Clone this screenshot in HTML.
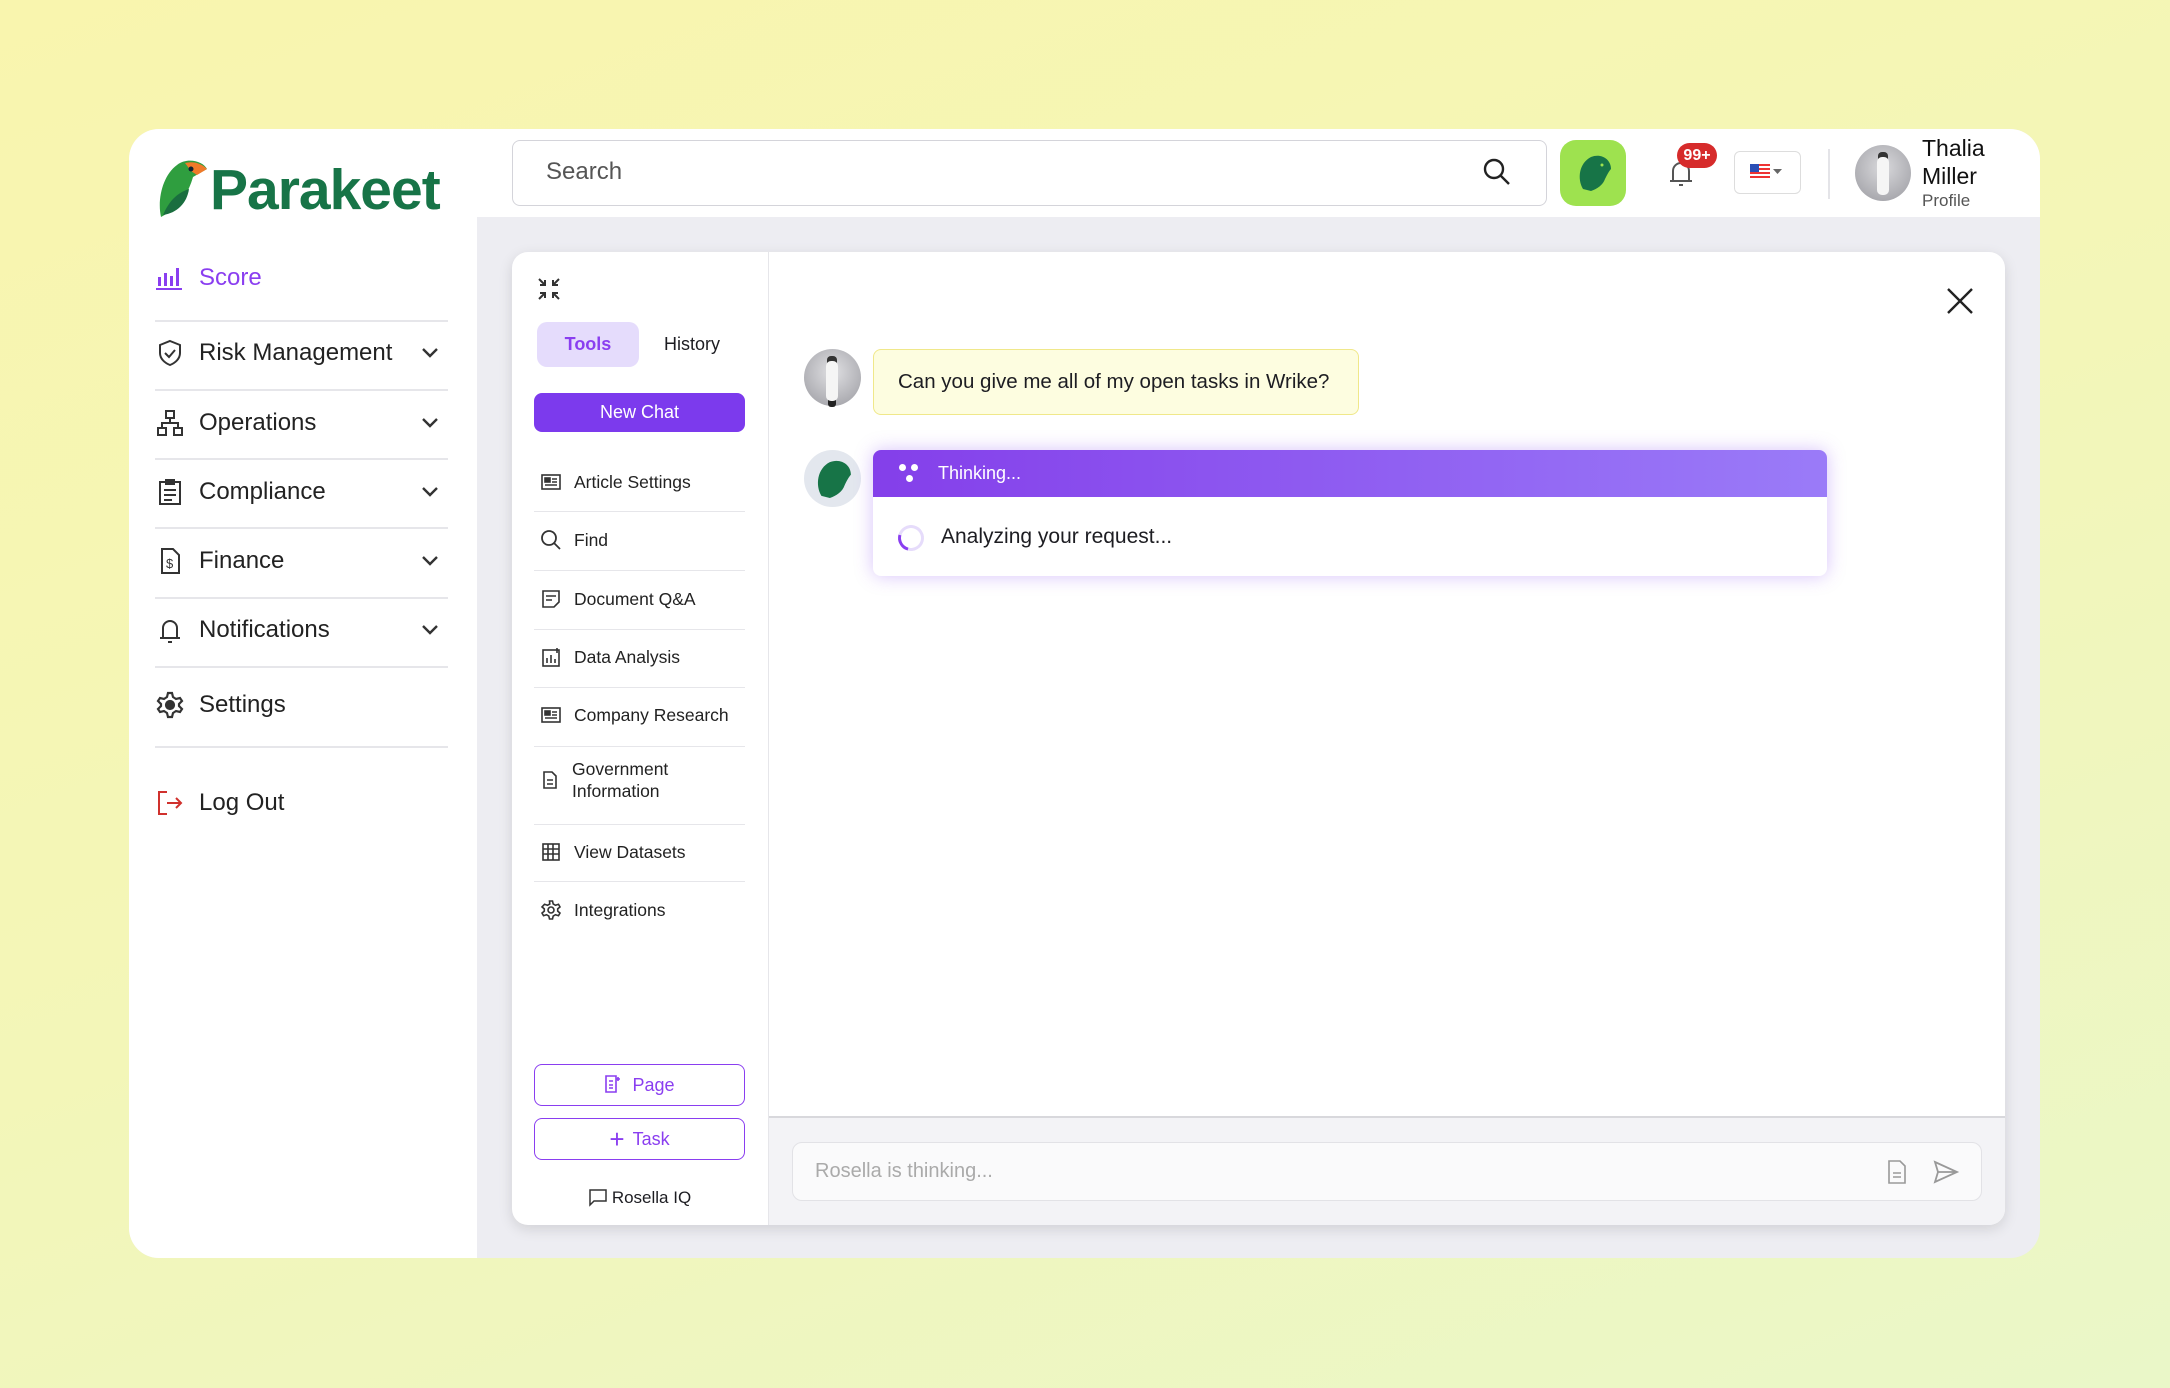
<!DOCTYPE html>
<html><head><meta charset="utf-8"><style>
*{box-sizing:border-box;margin:0;padding:0}
body{width:2170px;height:1388px;overflow:hidden;font-family:"Liberation Sans",sans-serif;background:linear-gradient(160deg,#f9f5ae 0%,#f3f6b8 50%,#eaf7c8 100%);position:relative;color:#1d1d22}
.a{position:absolute}
.card{left:129px;top:129px;width:1911px;height:1129px;background:#ededf2;border-radius:30px;overflow:hidden}
.side{left:0;top:0;width:348px;height:1129px;background:#fff}
.top{left:348px;top:0;width:1563px;height:88px;background:#fff}
.nav{position:absolute;left:26px;width:293px;font-size:24px;color:#222;display:flex;align-items:center}
.nav svg{margin-right:14px}
.hr{position:absolute;left:26px;width:293px;height:2px;background:#e6e6ea}
.chev{position:absolute;right:-6px}
.panel{left:383px;top:123px;width:1493px;height:973px;background:#fff;border-radius:16px;box-shadow:0 4px 14px rgba(0,0,0,.12);overflow:hidden}
.tool{position:absolute;left:28px;font-size:17.5px;color:#222;display:flex;align-items:center}
.tool svg{margin-right:12px}
.th{position:absolute;left:22px;width:211px;height:1px;background:#e6e6ea}
</style></head><body>
<div class="a card">
 <div class="a side">
  <svg class="a" style="left:26px;top:30px" width="60" height="62" viewBox="0 0 60 62"><path d="M22 6c10-8 26-4 30 4l-14 8c-4 14-12 30-32 40C2 40 8 16 22 6z" fill="#2f9e3f"/><path d="M30 4c8-2 16 0 22 6l-10 6-6-4z" fill="#ef7a2a"/><path d="M8 56c6-14 14-22 26-26-2 14-12 24-26 26z" fill="#1a6e3f"/><circle cx="36" cy="10" r="2.5" fill="#123"/></svg>
  <div class="a" style="left:81px;top:28px;font-size:57px;font-weight:700;color:#177447;letter-spacing:-1px">Parakeet</div>
  <div class="nav" style="top:135px;color:#8a3ef0"><svg width="30" height="26" viewBox="0 0 30 26" fill="#8a3ef0"><rect x="3" y="12" width="3" height="9"/><rect x="9" y="8" width="3" height="13"/><rect x="15" y="11" width="3" height="10"/><rect x="21" y="3" width="3" height="18"/><rect x="1" y="23" width="26" height="2"/></svg>Score</div>
  <div class="hr" style="top:191px"></div>
  <div class="nav" style="top:209px"><svg width="30" height="30" viewBox="0 0 30 30" fill="none" stroke="#333" stroke-width="2"><path d="M15 3l10 4v8c0 6-5 10-10 12-5-2-10-6-10-12V7z"/><path d="M10 15l4 4 6-7"/></svg>Risk Management<svg class="chev" width="20" height="12" viewBox="0 0 20 12"><path d="M3 2l7 7 7-7" fill="none" stroke="#333" stroke-width="2.4"/></svg></div>
  <div class="hr" style="top:260px"></div>
  <div class="nav" style="top:279px"><svg width="30" height="30" viewBox="0 0 30 30" fill="none" stroke="#333" stroke-width="2"><rect x="11" y="3" width="8" height="7"/><rect x="3" y="20" width="8" height="7"/><rect x="19" y="20" width="8" height="7"/><path d="M15 10v5M7 20v-5h16v5"/></svg>Operations<svg class="chev" width="20" height="12" viewBox="0 0 20 12"><path d="M3 2l7 7 7-7" fill="none" stroke="#333" stroke-width="2.4"/></svg></div>
  <div class="hr" style="top:329px"></div>
  <div class="nav" style="top:348px"><svg width="30" height="30" viewBox="0 0 30 30" fill="none" stroke="#333" stroke-width="2"><rect x="5" y="5" width="20" height="22"/><rect x="11" y="3" width="8" height="4"/><path d="M9 13h12M9 18h12M9 23h8"/></svg>Compliance<svg class="chev" width="20" height="12" viewBox="0 0 20 12"><path d="M3 2l7 7 7-7" fill="none" stroke="#333" stroke-width="2.4"/></svg></div>
  <div class="hr" style="top:398px"></div>
  <div class="nav" style="top:417px"><svg width="30" height="30" viewBox="0 0 30 30" fill="none" stroke="#333" stroke-width="2"><path d="M7 3h11l6 6v18H7z"/><text x="11" y="22" font-size="13" fill="#333" stroke="none">$</text></svg>Finance<svg class="chev" width="20" height="12" viewBox="0 0 20 12"><path d="M3 2l7 7 7-7" fill="none" stroke="#333" stroke-width="2.4"/></svg></div>
  <div class="hr" style="top:468px"></div>
  <div class="nav" style="top:486px"><svg width="30" height="30" viewBox="0 0 30 30" fill="none" stroke="#333" stroke-width="2"><path d="M8 23V13a7 7 0 0114 0v10zM5 23h20M13 27h4"/></svg>Notifications<svg class="chev" width="20" height="12" viewBox="0 0 20 12"><path d="M3 2l7 7 7-7" fill="none" stroke="#333" stroke-width="2.4"/></svg></div>
  <div class="hr" style="top:537px"></div>
  <div class="nav" style="top:561px"><svg width="30" height="30" viewBox="0 0 30 30" fill="none" stroke="#333" stroke-width="2.2"><circle cx="15" cy="15" r="4" fill="#333"/><path d="M13 3h4l1 4 3 2 4-1 2 3-3 3v2l3 3-2 3-4-1-3 2-1 4h-4l-1-4-3-2-4 1-2-3 3-3v-2L3 11l2-3 4 1 3-2z"/></svg>Settings</div>
  <div class="hr" style="top:617px"></div>
  <div class="nav" style="top:659px"><svg width="30" height="30" viewBox="0 0 30 30" fill="none" stroke="#d0312d" stroke-width="2"><path d="M12 4H4v22h8M12 15h14M21 10l5 5-5 5"/></svg>Log Out</div>
 </div>
 <div class="a top">
  <div class="a" style="left:35px;top:11px;width:1035px;height:66px;border:1.5px solid #d4d4da;border-radius:8px"></div>
  <div class="a" style="left:69px;top:29px;font-size:24px;color:#555">Search</div>
  <svg class="a" style="left:1005px;top:28px" width="30" height="30" viewBox="0 0 30 30" fill="none" stroke="#222" stroke-width="2.4"><circle cx="12" cy="12" r="9"/><path d="M19 19l8 8"/></svg>
  <div class="a" style="left:1083px;top:11px;width:66px;height:66px;background:#9ee24f;border-radius:16px"></div>
  <svg class="a" style="left:1098px;top:24px" width="38" height="40" viewBox="0 0 38 40"><path d="M8 36C2 26 4 10 16 4c10-4 20 2 20 12-2 2-4 6-6 10-2 6-8 10-14 12z" fill="#177447"/><circle cx="27" cy="12" r="1.5" fill="#9ee24f"/></svg>
  <svg class="a" style="left:1189px;top:28px" width="30" height="32" viewBox="0 0 30 32" fill="none" stroke="#555" stroke-width="2"><path d="M7 24V14a8 8 0 0116 0v10zM4 24h22M13 28h4"/></svg>
  <div class="a" style="left:1200px;top:14px;width:40px;height:25px;background:#d62b2b;border-radius:13px;color:#fff;font-size:16px;font-weight:700;text-align:center;line-height:25px">99+</div>
  <div class="a" style="left:1257px;top:22px;width:67px;height:43px;border:1.5px solid #ddd;border-radius:6px"></div>
  <svg class="a" style="left:1273px;top:35px" width="36" height="18" viewBox="0 0 36 18"><rect width="20" height="14" fill="#e33"/><rect y="2" width="20" height="2" fill="#fff"/><rect y="6" width="20" height="2" fill="#fff"/><rect y="10" width="20" height="2" fill="#fff"/><rect width="9" height="8" fill="#2b4fb5"/><path d="M23 5h9l-4.5 5z" fill="#666"/></svg>
  <div class="a" style="left:1351px;top:20px;width:2px;height:50px;background:#e4e4e8"></div>
  <div class="a" style="left:1378px;top:16px;width:56px;height:56px;border-radius:50%;background:radial-gradient(circle at 50% 40%,#d9d9dc,#9a9aa0)"></div>
  <div class="a" style="left:1400px;top:28px;width:12px;height:38px;background:#f5f5f5;border-radius:5px;box-shadow:0 -6px 0 -1px #333"></div>
  <div class="a" style="left:1445px;top:5px;font-size:23px;line-height:28px;color:#111">Thalia<br>Miller</div>
  <div class="a" style="left:1445px;top:62px;font-size:17px;color:#555">Profile</div>
 </div>
 <div class="a panel">
  <div class="a" style="left:256px;top:0;width:1px;height:973px;background:#e6e6ea"></div>
  <svg class="a" style="left:24px;top:24px" width="26" height="26" viewBox="0 0 26 26" fill="none" stroke="#333" stroke-width="2"><path d="M3 3l6 6M9 4v5H4M23 3l-6 6M17 4v5h5M3 23l6-6M4 17h5v5M23 23l-6-6M22 17h-5v5"/></svg>
  <div class="a" style="left:25px;top:70px;width:102px;height:45px;background:#e5dcfc;border-radius:10px;color:#8a3ef0;font-weight:700;font-size:18px;text-align:center;line-height:45px">Tools</div>
  <div class="a" style="left:140px;top:70px;width:80px;line-height:45px;font-size:18px;text-align:center">History</div>
  <div class="a" style="left:22px;top:141px;width:211px;height:39px;background:#7c3aed;border-radius:8px;color:#fff;font-size:18px;text-align:center;line-height:39px">New Chat</div>
  <div class="tool" style="top:219px"><svg width="22" height="22" viewBox="0 0 22 22" fill="none" stroke="#333" stroke-width="1.6"><rect x="2" y="4" width="18" height="14"/><rect x="5" y="7" width="5" height="4" fill="#333"/><path d="M12 8h5M12 11h5M5 14h12"/></svg>Article Settings</div>
  <div class="th" style="top:259px"></div>
  <div class="tool" style="top:277px"><svg width="22" height="22" viewBox="0 0 22 22" fill="none" stroke="#333" stroke-width="1.8"><circle cx="9" cy="9" r="7"/><path d="M14 14l6 6"/></svg>Find</div>
  <div class="th" style="top:318px"></div>
  <div class="tool" style="top:336px"><svg width="22" height="22" viewBox="0 0 22 22" fill="none" stroke="#333" stroke-width="1.6"><path d="M3 3h16v11l-5 5H3z"/><path d="M6 8h10M6 12h6"/></svg>Document Q&amp;A</div>
  <div class="th" style="top:377px"></div>
  <div class="tool" style="top:394px"><svg width="22" height="22" viewBox="0 0 22 22" fill="none" stroke="#333" stroke-width="1.6"><rect x="3" y="4" width="16" height="16"/><path d="M7 17v-5M11 17v-8M15 17v-4M17 2v5"/></svg>Data Analysis</div>
  <div class="th" style="top:435px"></div>
  <div class="tool" style="top:452px"><svg width="22" height="22" viewBox="0 0 22 22" fill="none" stroke="#333" stroke-width="1.6"><rect x="2" y="4" width="18" height="14"/><rect x="5" y="7" width="5" height="4" fill="#333"/><path d="M12 8h5M12 11h5M5 14h12"/></svg>Company Research</div>
  <div class="th" style="top:494px"></div>
  <div class="tool" style="top:506px;line-height:22px"><svg width="20" height="22" viewBox="0 0 20 22" fill="none" stroke="#333" stroke-width="1.6"><path d="M4 3h8l4 4v12H4z"/><path d="M7 11h6M7 15h6"/></svg>Government<br>Information</div>
  <div class="th" style="top:572px"></div>
  <div class="tool" style="top:589px"><svg width="22" height="22" viewBox="0 0 22 22" fill="none" stroke="#333" stroke-width="1.6"><rect x="3" y="3" width="16" height="16"/><path d="M3 8h16M3 13h16M8 3v16M13 3v16"/></svg>View Datasets</div>
  <div class="th" style="top:629px"></div>
  <div class="tool" style="top:647px"><svg width="22" height="22" viewBox="0 0 22 22" fill="none" stroke="#333" stroke-width="1.6"><circle cx="11" cy="11" r="3"/><path d="M9.5 2h3l.7 3 2.3 1.3 3-1 1.5 2.6-2.3 2v2.2l2.3 2-1.5 2.6-3-1-2.3 1.3-.7 3h-3l-.7-3-2.3-1.3-3 1-1.5-2.6 2.3-2V9.9l-2.3-2L4.5 5.3l3 1L9.8 5z"/></svg>Integrations</div>
  <div class="a" style="left:22px;top:812px;width:211px;height:42px;border:1.5px solid #8a3ef0;border-radius:8px;color:#8a3ef0;font-size:18px;text-align:center;line-height:40px"><svg width="18" height="20" viewBox="0 0 18 20" fill="none" stroke="#8a3ef0" stroke-width="1.6" style="vertical-align:-3px;margin-right:10px"><path d="M2 2h10v16H2zM5 7h4M5 11h4M5 14h4M14 3v4M12 5h4"/></svg>Page</div>
  <div class="a" style="left:22px;top:866px;width:211px;height:42px;border:1.5px solid #8a3ef0;border-radius:8px;color:#8a3ef0;font-size:18px;text-align:center;line-height:40px"><span style="font-size:26px;font-weight:300;vertical-align:-3px;margin-right:8px">+</span>Task</div>
  <div class="a" style="left:22px;top:935px;width:211px;text-align:center;font-size:17px"><svg width="20" height="20" viewBox="0 0 20 20" fill="none" stroke="#333" stroke-width="1.5" style="vertical-align:-4px;margin-right:4px"><path d="M2 3h16v11H6l-4 4z"/></svg>Rosella IQ</div>
  <svg class="a" style="left:1433px;top:34px" width="30" height="30" viewBox="0 0 30 30" stroke="#222" stroke-width="2.4"><path d="M3 3l24 24M27 3L3 27"/></svg>
  <div class="a" style="left:292px;top:97px;width:57px;height:57px;border-radius:50%;background:radial-gradient(circle at 50% 40%,#e0e0e3,#9a9aa0)"></div>
  <div class="a" style="left:314px;top:109px;width:12px;height:40px;background:#f5f5f5;border-radius:5px;box-shadow:0 -6px 0 -1px #333,0 8px 0 -2px #222"></div>
  <div class="a" style="left:361px;top:97px;width:486px;height:66px;background:#fdfde0;border:1.5px solid #f0e88a;border-radius:8px;font-size:20.5px;line-height:63px;padding-left:24px">Can you give me all of my open tasks in Wrike?</div>
  <div class="a" style="left:292px;top:198px;width:57px;height:57px;border-radius:50%;background:#e3e7ee"></div>
  <svg class="a" style="left:301px;top:205px" width="40" height="44" viewBox="0 0 38 40"><path d="M8 36C2 26 4 10 16 4c10-4 20 2 20 12-2 2-4 6-6 10-2 6-8 10-14 12z" fill="#177447"/></svg>
  <div class="a" style="left:361px;top:198px;width:954px;height:126px;border-radius:8px;background:#fff;box-shadow:0 0 18px rgba(140,80,240,.35);overflow:hidden">
   <div style="height:47px;background:linear-gradient(90deg,#843fea,#9a7bf8);color:#fff;font-size:18px;line-height:47px;padding-left:65px;position:relative">Thinking...<span style="position:absolute;left:26px;top:14px;width:7px;height:7px;border-radius:50%;background:#fff;box-shadow:12px 0 0 #fff,7px 11px 0 #fff"></span></div>
   <div style="position:absolute;left:25px;top:75px;width:26px;height:26px;border-radius:50%;border:3px solid #e6dcfb;border-left-color:#8a3ef0;transform:rotate(-30deg)"></div>
   <div style="position:absolute;left:68px;top:75px;font-size:21px">Analyzing your request...</div>
  </div>
  <div class="a" style="left:257px;top:864px;width:1236px;height:120px;background:#f3f3f6;border-top:2px solid #d8d8dc"></div>
  <div class="a" style="left:280px;top:890px;width:1190px;height:59px;background:#fafafb;border:1.5px solid #e2e2e6;border-radius:10px;font-size:20px;color:#aaa;line-height:56px;padding-left:22px">Rosella is thinking...</div>
  <svg class="a" style="left:1374px;top:907px" width="22" height="26" viewBox="0 0 22 26" fill="none" stroke="#999" stroke-width="1.6"><path d="M3 2h11l5 5v17H3zM7 14h8M7 18h8"/></svg>
  <svg class="a" style="left:1420px;top:907px" width="28" height="26" viewBox="0 0 28 26" fill="none" stroke="#999" stroke-width="1.8"><path d="M3 3l22 10L3 23l3-10zM6 13h19"/></svg>
 </div>
</div>
</body></html>
